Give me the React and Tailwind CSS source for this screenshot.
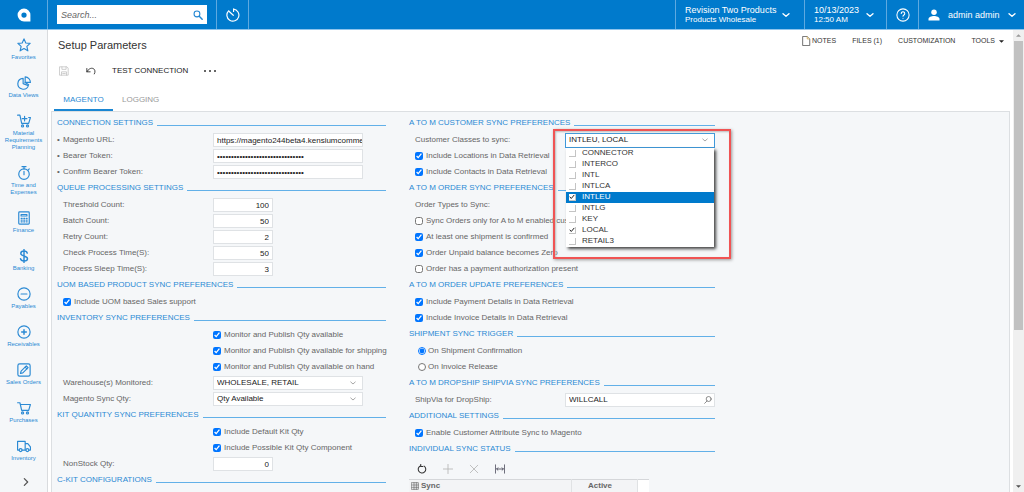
import React from "react";

function Svg({ className = "size-3.5", box = "0 0 24 24", width = 2, children }) {
  return (
    <svg viewBox={box} className={"shrink-0 " + className} fill="none" stroke="currentColor" strokeWidth={width} strokeLinecap="round" strokeLinejoin="round" aria-hidden="true">
      {children}
    </svg>
  );
}

const Down = ({ className = "size-2", width = 2 }) => (
  <Svg className={className} width={width}><path d="M3 8l9 8 9-8" /></Svg>
);

const cart = <path d="M1 3h4l3 13h12l3-10H6" />;
const wheels = <><circle cx="9.500" cy="20.500" r="1.800" /><circle cx="18" cy="20.500" r="1.800" /></>;

const modules = [
  ["Favorites", <path d="M12 1.500l3.100 7.100 7.400.7-5.600 5.100 1.700 7.600L12 18l-6.600 4 1.700-7.600L1.500 9.300l7.400-.7z" />],
  ["Data Views", <><path d="M10.500 4A9.300 9.300 0 1 0 19.500 16.500L10.500 13z" /><path d="M14 1.500V11h9A9.500 9.500 0 0 0 14 1.500z" /><path d="M14 11l6 4" /></>],
  ["Material Requirements Planning", <><path d="M1 2h4l3 14h12l3-10h-3" />{wheels}<path d="M13 4v8M9 8h8" /></>],
  ["Time and Expenses", <><circle cx="12" cy="14" r="9" /><path d="M12 5V1M8.500 1h7M12 9v6M19 7l2-2" /></>],
  ["Finance", <><rect x="3" y="1.500" width="18" height="21" rx="1.500" /><path d="M7 6h10v2.500H7z" /><path d="M7 12.500h2M11.500 12.500h2M16 12.500h1.500M7 15.500h2M11.500 15.500h2M16 15.500h1.500M7 18.500h2M11.500 18.500h2M16 18.500h1.500" /></>],
  ["Banking", <path strokeWidth="2.500" d="M12 1v22M17.500 7c-.5-2.500-2.500-3.500-5.500-3.500S6.500 5 6.500 7.500s2 3.500 5.500 4.500 6 2 6 4.500-2.500 4-6 4-5.500-1.500-6-4" />],
  ["Payables", <><circle cx="12" cy="12" r="10.500" /><path d="M7 12h10" /></>],
  ["Receivables", <><circle cx="12" cy="12" r="10.500" /><path d="M8 12h8M12 8v8" strokeWidth="2.500" /></>],
  ["Sales Orders", <><rect x="1.500" y="1.500" width="21" height="21" rx="3" /><path d="M6 18l1-4L16 5l3 3-9 9z" /><path d="M14 7l3 3" /></>],
  ["Purchases", <>{cart}{wheels}</>],
  ["Inventory", <><path d="M4 19H1V4h13v15H8.500M14 8h4.500l4.500 5.500V19H20.500M14 19h1" /><circle cx="6.200" cy="19" r="2.500" /><circle cx="17.800" cy="19" r="2.500" /></>],
];

function Header() {
  return (
    <header className="flex h-[30px] shrink-0 items-stretch border-b border-[#8fc4ec] bg-[#007acc] text-white">
      <a href="#home" aria-label="Home" className="flex w-12 items-center justify-center border-r border-[#5ea9e0]">
        <svg viewBox="0 0 24 24" className="size-3.5" aria-hidden="true">
          <path fillRule="evenodd" fill="#fff" d="M12 1a11 11 0 1 0 0 22h11V12A11 11 0 0 0 12 1zm0 6.500a4.500 4.500 0 1 1 0 9 4.500 4.500 0 0 1 0-9z" />
        </svg>
      </a>
      <div className="flex items-center border-r border-[#5ea9e0] px-[9px]">
        <label className="flex h-[19px] w-[150px] items-center bg-white pr-1 pl-1">
          <input aria-label="Search" placeholder="Search..." className="min-w-0 flex-1 text-[9px] text-gray-700 italic outline-none placeholder:text-[#666]" />
          <span className="text-[#2387d3]"><Svg className="size-2.5" width={2.500}><circle cx="9.500" cy="9.500" r="7" /><path d="M15 15l7 7" strokeWidth="3.500" /></Svg></span>
        </label>
      </div>
      <button aria-label="Recent" className="flex w-8 items-center justify-center border-r border-[#5ea9e0]">
        <Svg className="size-3.5"><path d="M13 2a10.300 10.300 0 1 1-8.500 3" /><path d="M13 2v4M5 5.500l7.500 7" /></Svg>
      </button>
      <div className="flex-1" />
      <button className="flex w-[129px] items-center justify-between border-l border-[#5ea9e0] pr-3.5 pl-[9px] text-left">
        <span className="text-[9px] leading-[10px]">Revision Two Products<small className="block text-[8px]">Products Wholesale</small></span>
        <Down width={4} />
      </button>
      <button className="flex w-[82px] items-center justify-between border-l border-[#5ea9e0] pr-3 pl-[9px] text-left">
        <span className="text-[9px] leading-[10px]">10/13/2023<small className="block text-[8px]">12:50 AM</small></span>
        <Down width={4} />
      </button>
      <button aria-label="Help" className="flex w-8 items-center justify-center border-l border-[#5ea9e0]">
        <Svg className="size-3.5" width={1.800}><circle cx="12" cy="12" r="10.500" /><path d="M9 9.500a3 3 0 1 1 4.500 2.600c-1 .6-1.500 1.100-1.500 2.200M12 17.500v.2" /></Svg>
      </button>
      <button className="flex w-[106px] items-center border-l border-[#5ea9e0] pr-2 pl-[9px] text-[9px]">
        <svg viewBox="0 0 24 24" className="size-3" fill="#fff" aria-hidden="true"><circle cx="12" cy="6.500" r="5.500" /><path d="M1 23v-3c0-4 6-6 11-6s11 2 11 6v3z" /></svg>
        <span className="ml-2 flex-1 text-left">admin admin</span>
        <Down width={4} />
      </button>
    </header>
  );
}

function Sidebar() {
  return (
    <nav className="flex w-12 shrink-0 flex-col items-center gap-[15px] overflow-hidden border-r border-[#d9dbde] bg-[#f5f7f9] pt-2">
      {modules.map(([name, icon]) => (
        <a key={name} href="#module" className="flex w-full shrink-0 flex-col items-center gap-0.5 px-1 text-center text-[6px] leading-[7px] text-[#2b8ad4]">
          <Svg>{icon}</Svg>
          {name}
        </a>
      ))}
      <button aria-label="More" className="ml-1 text-[#555]"><Svg className="size-2.5" width={3}><path d="M8 4l8 8-8 8" /></Svg></button>
    </nav>
  );
}

function Section({ title, children }) {
  return (
    <section>
      <h2 className="mb-px flex h-4 items-center gap-1 whitespace-nowrap text-[#2b8ad4]">
        {title}
        <span className="mt-1 h-px flex-1 bg-[#62b0e8]" />
      </h2>
      {children}
    </section>
  );
}

function Field({ label, id, required, children }) {
  return (
    <div className="flex h-4 items-center">
      <label htmlFor={id} className={required ? "w-[156px]" : "w-[156px] pl-1.5"}>
        {required && <span className="mr-0.5 inline-block w-1">•</span>}
        {label}
      </label>
      {children}
    </div>
  );
}

const box = "h-3.5 border border-[#dfe2e5] bg-white text-[#222] outline-none";

function NumberField({ label, id, value }) {
  return <Field label={label} id={id}><input id={id} defaultValue={value} className={box + " w-[60px] px-[3px] text-right"} /></Field>;
}

function TextField({ label, id, value, type = "text" }) {
  return <Field label={label} id={id} required><input id={id} type={type} defaultValue={value} className={box + " w-[150px] pl-[3px]"} /></Field>;
}

function SelectField({ label, id, value }) {
  return (
    <Field label={label} id={id}>
      <span className={box + " flex w-[150px] items-center pr-1.5"}>
        <select id={id} className="h-full min-w-0 flex-1 appearance-none pl-[3px] outline-none"><option>{value}</option></select>
        <Down className="size-1.5 text-[#888]" width={3} />
      </span>
    </Field>
  );
}

function Check({ label, checked, indent = "pl-1.5" }) {
  return (
    <label className={"flex h-4 items-center gap-[3px] whitespace-nowrap " + indent}>
      <input type="checkbox" defaultChecked={checked} className="size-2 shrink-0" />
      {label}
    </label>
  );
}

function Radio({ label, checked }) {
  return (
    <label className="flex h-4 items-center gap-0.5 pl-[9px]">
      <input type="radio" name="trigger" defaultChecked={checked} className="size-2" />
      {label}
    </label>
  );
}

const classes = ["CONNECTOR", "INTERCO", "INTL", "INTLCA", "INTLEU", "INTLG", "KEY", "LOCAL", "RETAIL3"];
const chosen = ["INTLEU", "LOCAL"];

function CustomerClasses() {
  return (
    <Field label="Customer Classes to sync:" id="classes">
      <div className="relative">
        <button id="classes" aria-expanded="true" className="flex h-[15px] w-[150px] items-center justify-between border border-[#3e98da] bg-white pr-1.5 pl-[3px] text-[#222]">
          INTLEU, LOCAL
          <Down className="size-1.5 text-[#888]" width={3} />
        </button>
        <div className="absolute top-[15px] left-px z-10 w-[148px] bg-white text-[#333] shadow-[2px_2px_3px_#444]">
          {classes.map((name) => (
            <label key={name} className={name === "INTLEU" ? "flex h-[11px] items-center gap-1.5 bg-[#007acc] pl-[3px] text-white" : "flex h-[11px] items-center gap-1.5 pl-[3px]"}>
              <span className="grid size-[7px] border-r border-b border-[#c4c4c4] bg-white text-[#222]">
                <input type="checkbox" defaultChecked={chosen.includes(name)} className="peer col-start-1 row-start-1 size-1.5 appearance-none" />
                <Svg className="invisible col-start-1 row-start-1 size-1.5 peer-checked:visible" width={4}><path d="M4 12l5 6L20 5" /></Svg>
              </span>
              {name}
            </label>
          ))}
        </div>
        <div className="pointer-events-none absolute -top-1 -left-3 z-20 h-[130px] w-[178px] border-2 border-[#f05454] shadow-[1px_1px_3px_#999,inset_1px_1px_2px_#bbb]" />
      </div>
    </Field>
  );
}

function SyncStatus() {
  return (
    <>
      <div className="flex h-[21px] items-center gap-4 pl-2 text-[#b5b5b5]">
        <button aria-label="Refresh" className="text-[#333]"><Svg className="size-2.5" width={2.500}><path d="M17 5a9 9 0 1 1-8-1M9 1v5h5" /></Svg></button>
        <button aria-label="Add"><Svg className="size-2.5"><path d="M12 1v22M1 12h22" /></Svg></button>
        <button aria-label="Delete"><Svg className="size-2.5"><path d="M3 3l18 18M21 3L3 21" /></Svg></button>
        <button aria-label="Fit columns" className="text-[#445]"><Svg className="size-2.5"><path d="M1 2v20M23 2v20M4 12h16M7 9l-3 3 3 3M17 9l3 3-3 3" /></Svg></button>
      </div>
      <table className="w-60 table-fixed border-t border-[#d5d7da] bg-[#f3f4f6] text-left">
        <thead>
          <tr className="h-3">
            <th className="w-3 pl-0.5" aria-label="Row settings"><Svg className="size-2"><path d="M2 2h20v20H2zM2 9h20M2 16h20M9 2v20M16 2v20" /></Svg></th>
            <th className="w-[150px] border-r border-[#e0e2e4] font-bold">Sync</th>
            <th className="border-r border-[#e0e2e4] pr-2 text-center font-bold">Active</th>
            <td className="w-3 bg-white" />
          </tr>
        </thead>
      </table>
    </>
  );
}

export default function App() {
  return (
    <div className="flex h-screen flex-col overflow-hidden bg-white font-['Liberation_Sans',Arial,sans-serif] text-[8px] leading-[10px] text-[#666]">
      <Header />
      <div className="flex min-h-0 flex-1">
        <Sidebar />
        <main className="flex min-w-0 flex-1 flex-col pr-[3px] pl-[3px]">
          <div className="flex h-[30px] shrink-0 items-center justify-between pr-1.5 pl-[7px]">
            <h1 className="text-[11px] leading-3 text-[#333]">Setup Parameters</h1>
            <div className="flex items-center gap-4 self-start pt-1.5 text-[7px] text-[#333]">
              <button className="flex items-center gap-px">
                <svg viewBox="0 0 24 24" className="size-2.5" fill="#fff" stroke="#555" strokeWidth="2" aria-hidden="true"><path d="M4 1h11l6 6v16H4z" /><path d="M15 1v6h6" stroke="#c9a24a" /></svg>
                NOTES
              </button>
              <button>FILES (1)</button>
              <button>CUSTOMIZATION</button>
              <button className="flex items-center gap-1">TOOLS <svg viewBox="0 0 8 4" className="h-[3px] w-[5px]" aria-hidden="true"><path d="M0 0h8L4 4z" fill="#222" /></svg></button>
            </div>
          </div>
          <div className="flex h-[22px] shrink-0 items-center pl-2 text-[#222]">
            <button aria-label="Save" className="mr-[17px] text-[#c4c4c4]"><Svg className="size-2.5"><path d="M2 2h17l3 3v17H2zM7 2v6h10V2M6 22v-8h12v8M9 18h6" /></Svg></button>
            <button aria-label="Undo" className="mr-4"><Svg className="size-2.5"><path d="M2 6v8h8M2 14C6 7 12 4 17 6s6 8 3 13" /></Svg></button>
            <button className="mr-4">TEST CONNECTION</button>
            <button aria-label="More actions"><svg viewBox="0 0 12 2" className="h-0.5 w-3" fill="#333" aria-hidden="true"><circle cx="1" cy="1" r="1" /><circle cx="6" cy="1" r="1" /><circle cx="11" cy="1" r="1" /></svg></button>
          </div>
          <div role="tablist" className="mt-2 flex h-[21px] shrink-0 pl-[3px]">
            <button role="tab" aria-selected="true" className="w-[59px] border-b-2 border-[#1a86d2] text-[#2b8ad4]">MAGENTO</button>
            <button role="tab" aria-selected="false" className="ml-[9px] pb-0.5 text-[#999]">LOGGING</button>
          </div>
          <div className="grid min-h-0 flex-1 grid-cols-[329px_306px] content-start gap-x-[23px] overflow-hidden border border-b-0 border-[#dcdfe2] bg-[#f5f7f9] pt-[3px] pl-[5px]">
            <div>
              <Section title="CONNECTION SETTINGS">
                <TextField label="Magento URL:" id="url" value="https://magento244beta4.kensiumcomme" />
                <TextField label="Bearer Token:" id="token" type="password" value="abcdefghijklmnopqrstuvwxyz01234" />
                <TextField label="Confirm Bearer Token:" id="token2" type="password" value="abcdefghijklmnopqrstuvwxyz01234" />
              </Section>
              <Section title="QUEUE PROCESSING SETTINGS">
                <NumberField label="Threshold Count:" id="threshold" value="100" />
                <NumberField label="Batch Count:" id="batch" value="50" />
                <NumberField label="Retry Count:" id="retry" value="2" />
                <NumberField label="Check Process Time(S):" id="check" value="50" />
                <NumberField label="Process Sleep Time(S):" id="sleep" value="3" />
              </Section>
              <Section title="UOM BASED PRODUCT SYNC PREFERENCES">
                <Check label="Include UOM based Sales support" checked />
              </Section>
              <Section title="INVENTORY SYNC PREFERENCES">
                <Check indent="pl-[156px]" label="Monitor and Publish Qty available" checked />
                <Check indent="pl-[156px]" label="Monitor and Publish Qty available for shipping" checked />
                <Check indent="pl-[156px]" label="Monitor and Publish Qty available on hand" checked />
                <SelectField label="Warehouse(s) Monitored:" id="warehouse" value="WHOLESALE, RETAIL" />
                <SelectField label="Magento Sync Qty:" id="qty" value="Qty Available" />
              </Section>
              <Section title="KIT QUANTITY SYNC PREFERENCES">
                <Check indent="pl-[156px]" label="Include Default Kit Qty" checked />
                <Check indent="pl-[156px]" label="Include Possible Kit Qty Component" checked />
                <NumberField label="NonStock Qty:" id="nonstock" value="0" />
              </Section>
              <Section title="C-KIT CONFIGURATIONS" />
            </div>
            <div>
              <Section title="A TO M CUSTOMER SYNC PREFERENCES">
                <CustomerClasses />
                <Check label="Include Locations in Data Retrieval" checked />
                <Check label="Include Contacts in Data Retrieval" checked />
              </Section>
              <Section title="A TO M ORDER SYNC PREFERENCES">
                <div className="flex h-4 items-center pl-1.5">Order Types to Sync:</div>
                <Check label="Sync Orders only for A to M enabled cus" />
                <Check label="At least one shipment is confirmed" checked />
                <Check label="Order Unpaid balance becomes Zero" checked />
                <Check label="Order has a payment authorization present" />
              </Section>
              <Section title="A TO M ORDER UPDATE PREFERENCES">
                <Check label="Include Payment Details in Data Retrieval" checked />
                <Check label="Include Invoice Details in Data Retrieval" checked />
              </Section>
              <Section title="SHIPMENT SYNC TRIGGER">
                <Radio label="On Shipment Confirmation" checked />
                <Radio label="On Invoice Release" />
              </Section>
              <Section title="A TO M DROPSHIP SHIPVIA SYNC PREFERENCES">
                <Field label="ShipVia for DropShip:" id="shipvia">
                  <span className={box + " flex w-[150px] items-center pr-0.5"}>
                    <input id="shipvia" defaultValue="WILLCALL" className="min-w-0 flex-1 pl-[3px] outline-none" />
                    <Svg className="size-2 text-[#555]"><circle cx="14" cy="9" r="7.500" /><path d="M9 15l-7 7" /></Svg>
                  </span>
                </Field>
              </Section>
              <Section title="ADDITIONAL SETTINGS">
                <Check label="Enable Customer Attribute Sync to Magento" checked />
              </Section>
              <Section title="INDIVIDUAL SYNC STATUS">
                <SyncStatus />
              </Section>
            </div>
          </div>
        </main>
        <div className="flex w-[11px] shrink-0 flex-col items-center bg-[#f0f0f0]" aria-hidden="true">
          <svg viewBox="0 0 8 4" className="my-1 h-[3px] w-[5px]"><path d="M0 4h8L4 0z" fill="#999" /></svg>
          <div className="h-[289px] w-[9px] bg-[#c1c1c1]" />
          <svg viewBox="0 0 8 4" className="mt-auto mb-1 h-[3px] w-[5px]"><path d="M0 0h8L4 4z" fill="#505050" /></svg>
        </div>
      </div>
    </div>
  );
}
